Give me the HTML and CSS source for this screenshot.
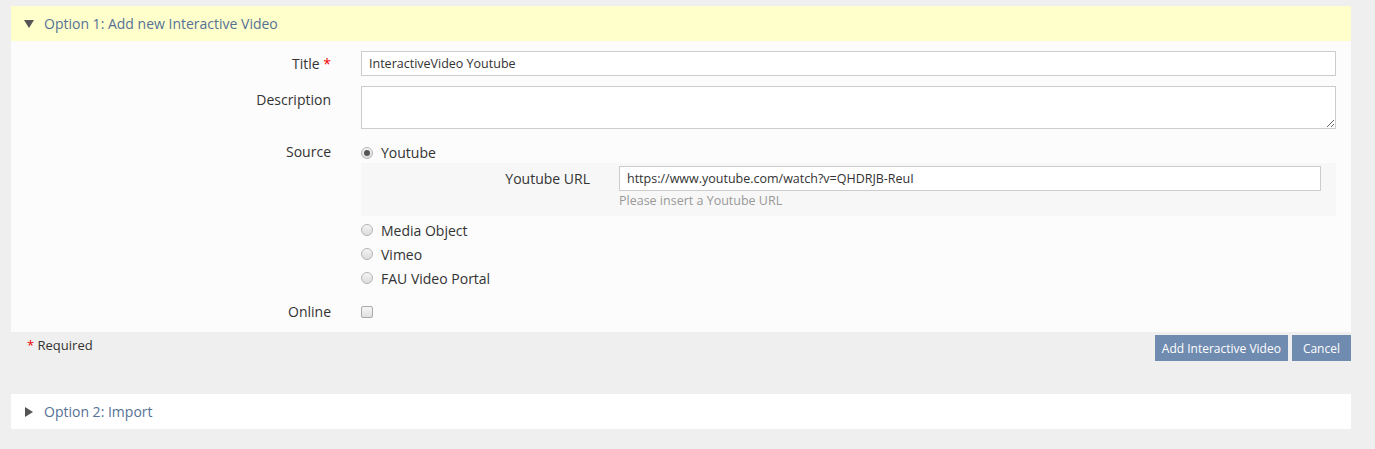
FILE: index.html
```html
<!DOCTYPE html>
<html>
<head>
<meta charset="utf-8">
<link rel="stylesheet" href="styles.css">
</head>
<body>
<div class="page">
  <div class="panel">
    <div class="panel-head open">
      <span class="tri-down"></span>
      <span class="head-title">Option 1: Add new Interactive Video</span>
    </div>
    <div class="panel-body">
      <div class="row row-title">
        <label class="lbl lbl-title">Title <span class="req">*</span></label>
        <div class="ctl"><input class="txt" type="text" value="InteractiveVideo Youtube"></div>
      </div>
      <div class="row row-desc">
        <label class="lbl lbl-desc">Description</label>
        <div class="ctl"><textarea class="area"></textarea></div>
      </div>
      <div class="row row-source">
        <label class="lbl lbl-line">Source</label>
        <div class="ctl">
          <div class="opt opt-first"><span class="radio checked"></span>Youtube</div>
          <div class="sub">
            <label class="sub-lbl">Youtube URL</label>
            <div class="sub-ctl">
              <input class="txt" type="text" value="https://www.youtube.com/watch?v=QHDRJB-ReuI">
              <div class="help">Please insert a Youtube URL</div>
            </div>
          </div>
          <div class="opt"><span class="radio"></span>Media Object</div>
          <div class="opt"><span class="radio"></span>Vimeo</div>
          <div class="opt"><span class="radio"></span>FAU Video Portal</div>
        </div>
      </div>
      <div class="row row-online">
        <label class="lbl lbl-line">Online</label>
        <div class="ctl"><span class="check"></span></div>
      </div>
    </div>
  </div>
  <div class="footer">
    <div class="required"><span class="req">*</span> Required</div>
    <div class="buttons">
      <button class="btn">Add Interactive Video</button>
      <button class="btn btn-cancel">Cancel</button>
    </div>
  </div>
  <div class="panel panel2">
    <div class="panel-head closed">
      <span class="tri-right"></span>
      <span class="head-title">Option 2: Import</span>
    </div>
  </div>
</div>
</body>
</html>
```
FILE: styles.css
```css
html, body {
  margin: 0;
  padding: 0;
  background: #efefef;
  font-family: "Open Sans", "Liberation Sans", sans-serif;
  color: #333;
}
.page {
  padding: 6px 24px 0 11px;
}
.panel-head {
  height: 35px;
  display: flex;
  align-items: center;
  padding-left: 13px;
  font-size: 14px;
}
.panel-head.open { background: #ffffcc; }
.panel-head.closed { background: #ffffff; }
.head-title {
  color: #557196;
}
.tri-down {
  width: 0; height: 0;
  border-left: 5px solid transparent;
  border-right: 5px solid transparent;
  border-top: 8px solid #555;
  margin-right: 10px;
  margin-top: 1px;
}
.tri-right {
  width: 0; height: 0;
  border-top: 5px solid transparent;
  border-bottom: 5px solid transparent;
  border-left: 8px solid #555;
  margin-left: 1px;
  margin-right: 11px;
}
.panel-body {
  background: #fcfcfc;
  padding: 10px 15px 10px 0;
}
.row {
  display: grid;
  grid-template-columns: 320px 1fr;
  column-gap: 30px;
}
.lbl {
  text-align: right;
  font-size: 14px;
  color: #333;
}
.lbl-title { line-height: 25px; }
.lbl-desc { line-height: 22px; padding-top: 3px; }
.lbl-line { line-height: 20px; }
.req { color: #e00; }
.row-desc { margin-top: 10px; }
.row-source { margin-top: 13px; }
.row-online { margin-top: 12px; }
.txt {
  box-sizing: border-box;
  display: block;
  width: 100%;
  height: 25px;
  border: 1px solid #ccc;
  background: #fff;
  padding: 0 7px;
  font-family: "Open Sans", "Liberation Sans", sans-serif;
  font-size: 12.5px;
  color: #333;
  margin: 0;
  outline: none;
}
.area {
  box-sizing: border-box;
  display: block;
  width: 100%;
  height: 43px;
  border: 1px solid #ccc;
  background: #fff;
  margin: 0;
  outline: none;
}
.opt {
  display: flex;
  align-items: center;
  height: 24px;
  font-size: 14px;
  color: #333;
}
.opt-first { height: 21px; }
.radio {
  box-sizing: border-box;
  width: 12px;
  height: 12px;
  border-radius: 50%;
  border: 1px solid #b5b5b5;
  background: linear-gradient(#f4f4f4, #dcdcdc);
  margin-right: 8px;
  position: relative;
}
.radio.checked::after {
  content: "";
  position: absolute;
  left: 2px; top: 2px;
  width: 6px; height: 6px;
  border-radius: 50%;
  background: #555;
}
.sub {
  background: #f7f7f7;
  display: grid;
  grid-template-columns: 229px 1fr;
  column-gap: 29px;
  padding: 3px 15px 6px 0;
  margin-bottom: 2px;
}
.sub-lbl {
  text-align: right;
  font-size: 14px;
  line-height: 25px;
  color: #333;
}
.help {
  font-size: 12.5px;
  line-height: 18px;
  margin-top: 1px;
  color: #999;
}
.row-online .ctl {
  display: flex;
  align-items: center;
  height: 20px;
}
.check {
  box-sizing: border-box;
  width: 12px;
  height: 12px;
  border: 1px solid #aaa;
  border-radius: 2px;
  background: linear-gradient(#f6f6f6, #e0e0e0);
}
.footer {
  display: flex;
  justify-content: space-between;
  align-items: flex-start;
  margin-top: 3px;
}
.required {
  padding-left: 16px;
  line-height: 20px;
  font-size: 13px;
  color: #333;
}
.buttons {
  display: flex;
  gap: 4px;
}
.btn {
  height: 26px;
  border: none;
  background: #6f8bb0;
  color: #fff;
  font-family: "Open Sans", "Liberation Sans", sans-serif;
  font-size: 12px;
  padding: 0 7px;
  margin: 0;
}
.btn-cancel {
  padding: 0 11px;
}
.panel2 {
  margin-top: 33px;
}
```
